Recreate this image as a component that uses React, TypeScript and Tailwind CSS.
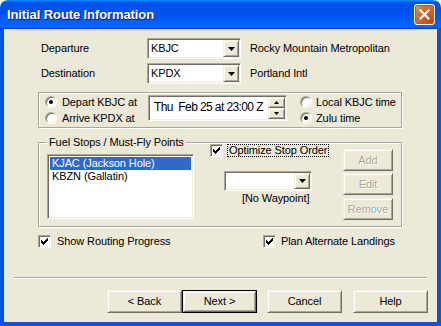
import type { ReactNode } from 'react'

// classic 3D edges on the XP "Luna" face colour
const sunken =
  'border border-t-[#ACA899] border-l-[#ACA899] border-r-white border-b-white shadow-[inset_1px_1px_0_#716F64,inset_-1px_-1px_0_#F1EFE2]'
const raised =
  'border border-t-[#F1EFE2] border-l-[#F1EFE2] border-r-[#716F64] border-b-[#716F64] shadow-[inset_1px_1px_0_#fff,inset_-1px_-1px_0_#ACA899]'
const etched = 'border border-[#ACA899] shadow-[1px_1px_0_#fff,inset_1px_1px_0_#fff]'

function DownArrow({ w = 7, h = 4 }: { w?: number; h?: number }) {
  return (
    <svg width={w} height={h} viewBox={`0 0 ${w} ${h}`} className="block">
      <polygon points={`0,0 ${w},0 ${w / 2},${h}`} fill="#000" />
    </svg>
  )
}

function Combo({ value, className }: { value?: string; className: string }) {
  return (
    <div className={`flex bg-white ${sunken} ${className}`}>
      <span className="flex-1 pl-[3px] leading-[17px] pt-px">{value}</span>
      <div className={`m-px w-[16px] flex items-center justify-center bg-[#ECE9D8] ${raised}`}>
        <DownArrow />
      </div>
    </div>
  )
}

function Radio({ on }: { on?: boolean }) {
  return (
    <span
      className={`relative w-[12px] h-[12px] shrink-0 rounded-full bg-white border border-t-[#ACA899] border-l-[#ACA899] border-r-white border-b-white shadow-[inset_1px_1px_0_#716F64,inset_-1px_-1px_0_#F1EFE2]`}
    >
      {on && <span className="absolute left-[3px] top-[3px] w-[4px] h-[4px] rounded-full bg-black" />}
    </span>
  )
}

function Check() {
  const cols = [2, 3, 4, 3, 2, 1, 0]
  return (
    <span className={`w-[13px] h-[13px] shrink-0 bg-white flex items-center justify-center ${sunken}`}>
      <svg width="7" height="7" viewBox="0 0 7 7" className="block">
        {cols.map((y, x) => (
          <rect key={x} x={x} y={y} width="1" height="3" fill="#000" />
        ))}
      </svg>
    </span>
  )
}

function Btn({
  children,
  disabled,
  isDefault,
  className = '',
}: {
  children: ReactNode
  disabled?: boolean
  isDefault?: boolean
  className?: string
}) {
  const label = (
    <span className={disabled ? 'text-[#ACA899] [text-shadow:1px_1px_0_#fff]' : ''}>{children}</span>
  )
  if (isDefault)
    return (
      <div className={`border border-black flex ${className}`}>
        <div className={`flex-1 flex items-center justify-center bg-[#ECE9D8] ${raised}`}>{label}</div>
      </div>
    )
  return (
    <div className={`flex items-center justify-center bg-[#ECE9D8] ${raised} ${className}`}>{label}</div>
  )
}

function TitleBar() {
  return (
    <div className="h-[29px] shrink-0 rounded-t-[8px] flex items-center pl-[7px] pr-[6px] bg-[linear-gradient(180deg,#0997ff,#0053ee_8%,#0050ee_40%,#0066ff_88%,#0066ff_93%,#005bff_95%,#003dd7_96%,#003dd7)]">
      <span className="flex-1 text-white font-bold text-[13px] leading-none [text-shadow:1px_1px_0_#0a1883]">
        Initial Route Information
      </span>
      <div className="w-[21px] h-[21px] rounded-[3px] border border-white flex items-center justify-center bg-[radial-gradient(circle_at_90%_90%,#cc4600_0%,#dc6527_55%,#cd7546_70%,#e5a01a_90%,#ffffff_100%)] bg-[#DA5B2C] shadow-[inset_0_0_1px_1px_#da4a18]">
        <svg width="11" height="11" viewBox="0 0 11 11" className="block">
          <path d="M1.5 1.5 L9.5 9.5 M9.5 1.5 L1.5 9.5" stroke="#fff" strokeWidth="2.2" strokeLinecap="square" />
        </svg>
      </div>
    </div>
  )
}

export default function App() {
  return (
    <div className="w-[441px] h-[326px] flex flex-col font-['Liberation_Sans',Arial,sans-serif] text-[11px] tracking-[-0.1px] text-black select-none">
      <TitleBar />
      <div className="flex-1 border-x-4 border-b-4 border-[#0055E5] bg-[#ECE9D8]">
        {/* airports */}
        <div className="pt-[9px] pl-[37px]">
          <div className="flex items-center h-[21px]">
            <span className="w-[106px]">Departure</span>
            <Combo value="KBJC" className="w-[94px] h-[21px]" />
            <span className="ml-[9px]">Rocky Mountain Metropolitan</span>
          </div>
          <div className="flex items-center h-[21px] mt-[4px]">
            <span className="w-[106px]">Destination</span>
            <Combo value="KPDX" className="w-[94px] h-[21px]" />
            <span className="ml-[9px]">Portland Intl</span>
          </div>
        </div>

        {/* time */}
        <div className={`mt-[8px] ml-[34px] w-[364px] h-[36px] flex items-start ${etched}`}>
          <div className="pl-[6px] pt-px w-[109px]">
            <div className="h-[16px] flex items-center">
              <Radio on />
              <span className="ml-[5px]">Depart KBJC at</span>
            </div>
            <div className="h-[16px] flex items-center">
              <Radio />
              <span className="ml-[5px]">Arrive KPDX at</span>
            </div>
          </div>
          <div className={`mt-[2px] w-[139px] h-[26px] flex bg-white ${sunken}`}>
            <span className="flex-1 pl-[5px] text-[12px] leading-[22px] tracking-[-0.6px] whitespace-nowrap overflow-hidden">
              Thu&nbsp; Feb 25 at 23:00 Z
            </span>
            <div className="flex flex-col w-[17px] m-px shrink-0">
              <div className={`flex-1 flex items-center justify-center bg-[#ECE9D8] ${raised}`}>
                <svg width="5" height="3" viewBox="0 0 5 3" className="block">
                  <polygon points="0,3 5,3 2.5,0" fill="#000" />
                </svg>
              </div>
              <div className={`flex-1 flex items-center justify-center bg-[#ECE9D8] ${raised}`}>
                <DownArrow w={5} h={3} />
              </div>
            </div>
          </div>
          <div className="ml-[13px] pt-px">
            <div className="h-[16px] flex items-center">
              <Radio />
              <span className="ml-[4px]">Local KBJC time</span>
            </div>
            <div className="h-[16px] flex items-center">
              <Radio on />
              <span className="ml-[4px]">Zulu time</span>
            </div>
          </div>
        </div>

        {/* fuel stops */}
        <div className={`relative mt-[14px] ml-[34px] w-[364px] h-[85px] flex items-start pl-[8px] ${etched}`}>
          <span className="absolute left-[8px] top-[-7px] px-[2px] leading-[13px] bg-[#ECE9D8]">
            Fuel Stops / Must-Fly Points
          </span>
          <div className={`mt-[11px] w-[147px] h-[65px] bg-white p-[2px] ${sunken}`}>
            <div className="h-[13px] leading-[13px] pl-[2px] bg-[#316AC5] text-white">KJAC (Jackson Hole)</div>
            <div className="h-[13px] leading-[13px] pl-[2px]">KBZN (Gallatin)</div>
          </div>
          <div className="ml-[16px] mt-px w-[133px]">
            <div className="h-[13px] flex items-center">
              <Check />
              <span className="ml-[4px] px-px leading-[11px] border border-dotted border-black">
                Optimize Stop Order
              </span>
            </div>
            <Combo className="ml-[14px] mt-[14px] w-[88px] h-[20px]" />
            <div className="ml-[32px] mt-px leading-[13px]">[No Waypoint]</div>
          </div>
          <div className="mt-[6px] w-[50px]">
            <Btn disabled className="h-[22px]">Add</Btn>
            <Btn disabled className="h-[22px] mt-[2px]">Edit</Btn>
            <Btn disabled className="h-[22px] mt-[3px]">Remove</Btn>
          </div>
        </div>

        {/* options */}
        <div className="mt-[8px] ml-[34px] flex items-center h-[13px]">
          <div className="w-[225px] flex items-center">
            <Check />
            <span className="ml-[6px]">Show Routing Progress</span>
          </div>
          <Check />
          <span className="ml-[5px]">Plan Alternate Landings</span>
        </div>

        <div className="mt-[29px] ml-[10px] w-[413px] h-[2px] border-t border-t-[#ACA899] border-b border-b-white" />

        <div className="mt-[11px] ml-[103px] flex">
          <Btn className="w-[75px] h-[23px]">&lt; Back</Btn>
          <Btn isDefault className="w-[75px] h-[23px]">Next &gt;</Btn>
          <Btn className="ml-[10px] w-[75px] h-[23px]">Cancel</Btn>
          <Btn className="ml-[11px] w-[75px] h-[23px]">Help</Btn>
        </div>
      </div>
    </div>
  )
}
